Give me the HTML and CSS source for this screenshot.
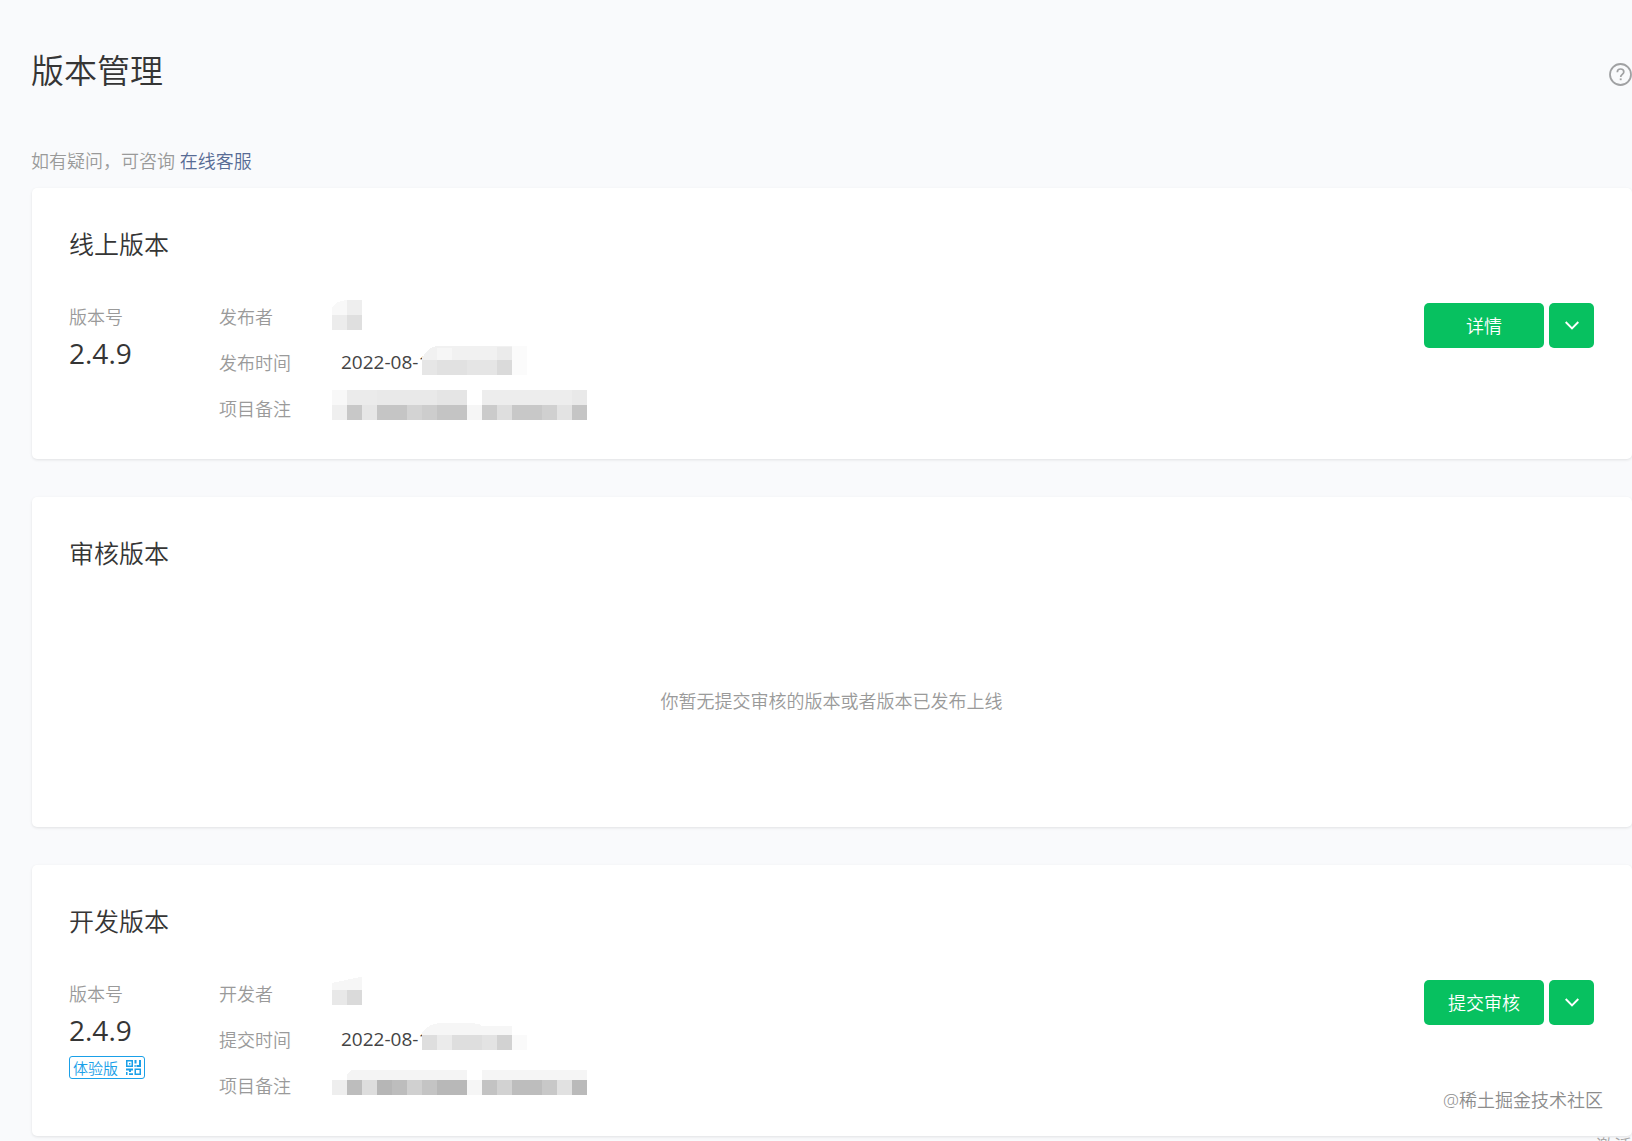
FILE: index.html
```html
<!DOCTYPE html>
<html lang="zh-CN">
<head>
  <meta charset="UTF-8" />
  <title>版本管理</title>
  <link rel="stylesheet" href="styles.css">
</head>
<body>
  <header class="page-header">
    <h1>版本管理</h1>
    <button class="help-btn" type="button" aria-label="帮助">
      <svg width="23" height="23" viewBox="0 0 23 23" fill="none" stroke="#a0a1a3">
        <circle cx="11.5" cy="11.5" r="10.5" stroke-width="1.8" />
        <path d="M8.3 9.2c0-2 1.4-3.2 3.3-3.2s3.2 1.2 3.2 2.9c0 2.4-3.1 2.4-3.1 5" stroke-width="1.7" />
        <path d="M11.7 15.4v1.8" stroke-width="1.9" />
      </svg>
    </button>
  </header>

  <p class="tips">如有疑问，可咨询 <a href="#">在线客服</a></p>

  <main class="cards">
    <section class="card">
      <h2>线上版本</h2>
      <div class="card-body">
        <div class="version">
          <p class="label">版本号</p>
          <p class="number">2.4.9</p>
        </div>
        <dl class="meta">
          <dt>发布者</dt>
          <dd></dd>
          <dt>发布时间</dt>
          <dd>2022-08-1</dd>
          <dt>项目备注</dt>
          <dd></dd>
          <svg class="mosaic" width="255" height="120" viewBox="0 0 255 120" shape-rendering="crispEdges">
            <path d="M0 15V8Q3 1 15 0V15z" fill="#f8f8f8" />
            <path d="M15 0h15v15H15z" fill="#eeeeee" />
            <path d="M0 15h15v15H0z" fill="#ececec" />
            <path d="M15 15h15v15H15z" fill="#dfdfdf" />

            <path d="M90 60V58Q96 47 105 46H195V60z" fill="#f1f1f1" />
            <path d="M105 48h15v12h-15z" fill="#f6f6f6" />
            <path d="M165 47h15v13h-15z" fill="#ebebeb" />
            <path d="M180 46h15v29h-15z" fill="#fbfbfb" />
            <path d="M90 60h15v15H90z" fill="#e6e6e6" />
            <path d="M105 60h30v15h-30z" fill="#e1e1e1" />
            <path d="M135 60h30v15h-30z" fill="#e5e5e5" />
            <path d="M165 60h15v15h-15z" fill="#dadada" />

            <path d="M0 90h15v15H0z" fill="#f8f8f8" />
            <path d="M15 90h30v15H15z" fill="#ebebeb" />
            <path d="M45 90h60v15H45z" fill="#e9e9e9" />
            <path d="M105 90h30v15h-30z" fill="#e5e5e5" />
            <path d="M150 90h90v15h-90z" fill="#ededed" />
            <path d="M240 90h15v15h-15z" fill="#e9e9e9" />
            <path d="M0 105h15v15H0z" fill="#efefef" />
            <path d="M15 105h15v15H15z" fill="#c8c8c8" />
            <path d="M30 105h15v15H30z" fill="#e6e6e6" />
            <path d="M45 105h30v15H45z" fill="#c5c5c5" />
            <path d="M75 105h15v15H75z" fill="#d3d3d3" />
            <path d="M90 105h15v15H90z" fill="#cdcdcd" />
            <path d="M105 105h30v15h-30z" fill="#c4c4c4" />
            <path d="M135 105h15v15h-15z" fill="#f6f6f6" />
            <path d="M150 105h15v15h-15z" fill="#cbcbcb" />
            <path d="M165 105h15v15h-15z" fill="#dedede" />
            <path d="M180 105h30v15h-30z" fill="#c8c8c8" />
            <path d="M210 105h15v15h-15z" fill="#d0d0d0" />
            <path d="M225 105h15v15h-15z" fill="#e3e3e3" />
            <path d="M240 105h15v15h-15z" fill="#c5c5c5" />
          </svg>
        </dl>
        <div class="actions">
          <button class="btn btn-main" type="button">详情</button>
          <button class="btn btn-more" type="button" aria-label="更多">
            <svg width="14" height="9" viewBox="0 0 14 9" fill="none" stroke="#fff" stroke-width="1.9">
              <path d="M.7 1 7 7.3 13.3 1" />
            </svg>
          </button>
        </div>
      </div>
    </section>

    <section class="card">
      <h2>审核版本</h2>
      <p class="empty">你暂无提交审核的版本或者版本已发布上线</p>
    </section>

    <section class="card">
      <h2>开发版本</h2>
      <div class="card-body">
        <div class="version">
          <p class="label">版本号</p>
          <p class="number">2.4.9</p>
          <a class="trial" href="#">体验版
            <svg width="15" height="15" viewBox="0 0 15 15" fill="#1aa0e8">
              <path d="M0 0h7v7H0zM1.5 1.5v4h4v-4z" fill-rule="evenodd" />
              <path d="M3 3h1.4v1.4H3z" />
              <path d="M8.5 0h2v3.5h-2zM13 0h2v7h-4.5V5H13zM8.5 5h1.2v2H8.5z" />
              <path d="M0 8.5h7v2H5V12H3v-1.5H0zM0 12h1.5v3H0zM3 13.3h4V15H3z" />
              <path d="M8.5 8.5H15V15H8.5zM10 10v3.5h3.5V10z" fill-rule="evenodd" />
            </svg>
          </a>
        </div>
        <dl class="meta">
          <dt>开发者</dt>
          <dd></dd>
          <dt>提交时间</dt>
          <dd>2022-08-1</dd>
          <dt>项目备注</dt>
          <dd></dd>
          <svg class="mosaic" width="255" height="120" viewBox="0 0 255 120" shape-rendering="crispEdges">
            <path d="M0 13V6L28 0h2V13z" fill="#f6f6f6" />
            <path d="M0 13h15v15H0z" fill="#e8e8e8" />
            <path d="M15 13h15v15H15z" fill="#dadada" />

            <path d="M90 58V56Q96 46 110 46H135Q148 46 150 49H180V58z" fill="#f6f6f6" />
            <path d="M90 58h15v15H90z" fill="#dedede" />
            <path d="M105 58h15v15h-15z" fill="#ebebeb" />
            <path d="M120 58h30v15h-30z" fill="#dedede" />
            <path d="M150 58h15v15h-15z" fill="#e3e3e3" />
            <path d="M165 58h15v15h-15z" fill="#d2d2d2" />
            <path d="M180 58h15v15h-15z" fill="#fafafa" />

            <path d="M15 103V97L20 93H135V103z" fill="#f4f4f4" />
            <path d="M150 93h105v10H150z" fill="#f5f5f5" />
            <path d="M0 103h15v15H0z" fill="#eeeeee" />
            <path d="M15 103h15v15H15z" fill="#bdbdbd" />
            <path d="M30 103h15v15H30z" fill="#dddddd" />
            <path d="M45 103h15v15H45z" fill="#b6b6b6" />
            <path d="M60 103h15v15H60z" fill="#bdbdbd" />
            <path d="M75 103h15v15H75z" fill="#d0d0d0" />
            <path d="M90 103h15v15H90z" fill="#c4c4c4" />
            <path d="M105 103h30v15h-30z" fill="#b8b8b8" />
            <path d="M135 103h15v15h-15z" fill="#f6f6f6" />
            <path d="M150 103h15v15h-15z" fill="#c3c3c3" />
            <path d="M165 103h15v15h-15z" fill="#d2d2d2" />
            <path d="M180 103h30v15h-30z" fill="#bdbdbd" />
            <path d="M210 103h15v15h-15z" fill="#c8c8c8" />
            <path d="M225 103h15v15h-15z" fill="#e1e1e1" />
            <path d="M240 103h15v15h-15z" fill="#bababa" />
          </svg>
        </dl>
        <div class="actions">
          <button class="btn btn-main" type="button">提交审核</button>
          <button class="btn btn-more" type="button" aria-label="更多">
            <svg width="14" height="9" viewBox="0 0 14 9" fill="none" stroke="#fff" stroke-width="1.9">
              <path d="M.7 1 7 7.3 13.3 1" />
            </svg>
          </button>
        </div>
      </div>
      <span class="watermark">@稀土掘金技术社区</span>
    </section>
  </main>

  <footer class="page-footer">激活</footer>
</body>
</html>
```

FILE: styles.css
```css
* {
  box-sizing: border-box;
}

body {
  margin: 0;
  padding: 46px 0 0 31px;
  background: #f9fafc;
  color: #353535;
  font-family: "Open Sans", "Noto Sans CJK SC", sans-serif;
  font-size: 18px;
  font-weight: 350;
  line-height: 28px;
}

h1, h2, p, dl, dd {
  margin: 0;
  font-weight: 350;
}

a {
  color: #576b95;
  text-decoration: none;
}

button {
  padding: 0;
  border: none;
  background: none;
  font: inherit;
  cursor: pointer;
}

.page-header {
  display: flex;
  justify-content: space-between;
  align-items: center;
  margin-bottom: 51px;
}

h1 {
  font-size: 33px;
  line-height: 50px;
}

.help-btn {
  display: flex;
  padding-top: 7px;
}

.tips {
  margin-bottom: 13px;
  color: #9a9a9a;
}

/* Cards */
.cards {
  display: flex;
  flex-direction: column;
  gap: 38px;
  margin-left: 1px;
}

.card {
  position: relative;
  padding: 36px 38px 36px 37px;
  background: #fff;
  border-radius: 5px;
  box-shadow: 0 1px 3px rgba(0, 0, 0, 0.1);
}

h2 {
  margin-bottom: 39px;
  font-size: 25px;
  line-height: 40px;
}

.card-body {
  display: flex;
  align-items: flex-start;
}

.version {
  width: 150px;
}

.label {
  color: #9a9a9a;
}

.number {
  font-size: 28px;
  font-weight: 400;
  line-height: 44px;
}

.trial {
  display: inline-flex;
  align-items: center;
  gap: 8px;
  height: 23px;
  margin-top: 4px;
  padding: 0 3px;
  border: 1px solid #1aa0e8;
  border-radius: 3px;
  color: #1aa0e8;
  font-size: 15px;
  vertical-align: top;
}

.meta {
  position: relative;
  display: grid;
  grid-template-columns: 113px 1fr;
  row-gap: 18px;
}

.meta dt {
  color: #9a9a9a;
}

.meta dd {
  padding-left: 9px;
  color: #444;
  font-size: 19px;
  font-weight: 400;
  line-height: 26px;
}

/* pixelated cover over the private values */
.mosaic {
  position: absolute;
  top: -3px;
  left: 113px;
}

.actions {
  display: flex;
  gap: 5px;
  margin-left: auto;
}

.btn {
  display: flex;
  align-items: center;
  justify-content: center;
  height: 45px;
  border-radius: 5px;
  background: #07c160;
  color: #fff;
}

.btn:hover {
  background: #06ad56;
}

.btn-main {
  width: 120px;
}

.btn-more {
  width: 45px;
}

.empty {
  padding: 75px 0 76px;
  color: #9a9a9a;
  text-align: center;
}

.watermark {
  position: absolute;
  right: 29px;
  bottom: 22px;
  color: #8c8c8c;
}

.page-footer {
  height: 5px;
  overflow: hidden;
  color: #a8a8a8;
  line-height: 20px;
  text-align: right;
}
```
